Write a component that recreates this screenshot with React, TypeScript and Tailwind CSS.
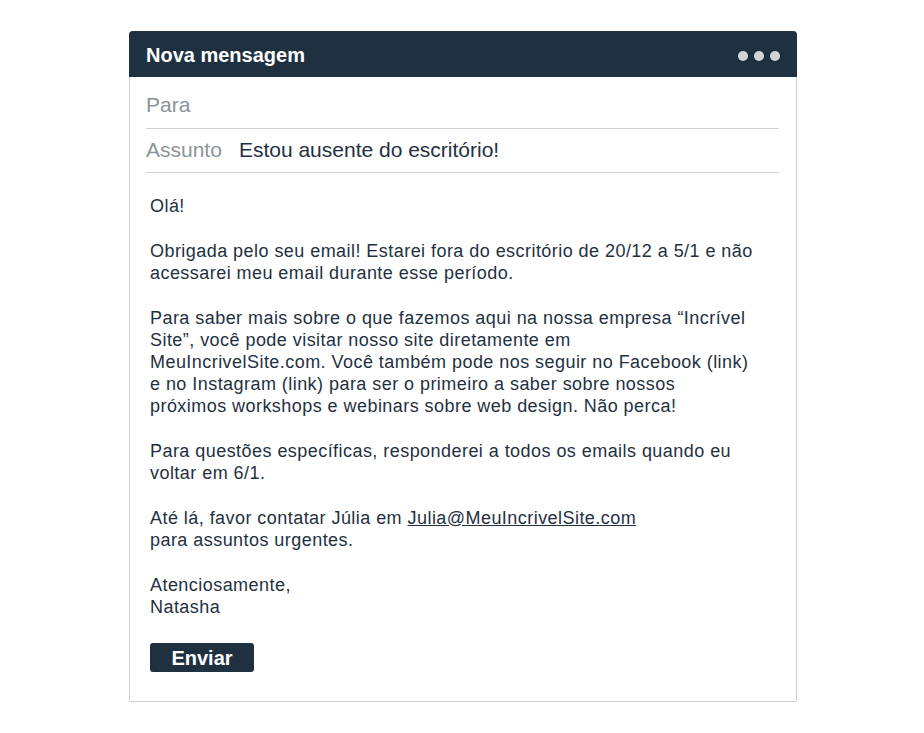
const bodyLines: string[][] = [
  ['Olá!'],
  [
    'Obrigada pelo seu email! Estarei fora do escritório de 20/12 a 5/1 e não',
    'acessarei meu email durante esse período.',
  ],
  [
    'Para saber mais sobre o que fazemos aqui na nossa empresa “Incrível',
    'Site”, você pode visitar nosso site diretamente em',
    'MeuIncrivelSite.com. Você também pode nos seguir no Facebook (link)',
    'e no Instagram (link) para ser o primeiro a saber sobre nossos',
    'próximos workshops e webinars sobre web design. Não perca!',
  ],
  [
    'Para questões específicas, responderei a todos os emails quando eu',
    'voltar em 6/1.',
  ],
];

export default function App() {
  return (
    <div className="min-h-screen bg-white pt-[31px] font-['Liberation_Sans',Arial,sans-serif]">
      <div className="ml-[129px] w-[668px] h-[671px] border border-[#d0d3d6] rounded-t-[4px] flex flex-col">
        {/* header */}
        <div className="h-[46px] -mx-px -mt-px bg-[#1f3141] rounded-t-[4px] flex items-center justify-between pt-[1px] pl-[17px] pr-[17px]">
          <span className="text-white font-bold text-[20px]">Nova mensagem</span>
          <div className="flex gap-[6px] pt-[2px]">
            <span className="w-[10px] h-[10px] rounded-full bg-[#d2d4d6]" />
            <span className="w-[10px] h-[10px] rounded-full bg-[#d2d4d6]" />
            <span className="w-[10px] h-[10px] rounded-full bg-[#d2d4d6]" />
          </div>
        </div>

        {/* fields */}
        <div className="pl-[16px] pr-[17px]">
          <div className="h-[52px] border-b border-[#cfd2d4] flex items-center pt-[5px]">
            <span className="text-[21px] text-[#8a939b]">Para</span>
          </div>
          <div className="h-[44px] border-b border-[#cfd2d4] flex items-center gap-[17px] pb-[1px]">
            <span className="text-[21px] text-[#8a939b]">Assunto</span>
            <span className="text-[21px] text-[#1f3141]">Estou ausente do escritório!</span>
          </div>
        </div>

        {/* body */}
        <div className="pl-[20px] pt-[22px] text-[18px] tracking-[0.45px] leading-[22px] text-[#1f3141] flex flex-col gap-[23px]">
          {bodyLines.map((p, i) => (
            <p key={i} className="whitespace-nowrap">
              {p.map((l, j) => (
                <span key={j} className="block">{l}</span>
              ))}
            </p>
          ))}
          <p className="whitespace-nowrap">
            <span className="block">
              Até lá, favor contatar Júlia em <a className="underline">Julia@MeuIncrivelSite.com</a>
            </span>
            <span className="block">para assuntos urgentes.</span>
          </p>
          <p className="whitespace-nowrap">
            <span className="block">Atenciosamente,</span>
            <span className="block">Natasha</span>
          </p>
          <div className="mt-[2px]">
            <button className="w-[104px] h-[29px] bg-[#1f3141] rounded-[3px] text-white font-bold text-[20px] tracking-normal leading-none">
              Enviar
            </button>
          </div>
        </div>
      </div>
    </div>
  );
}
